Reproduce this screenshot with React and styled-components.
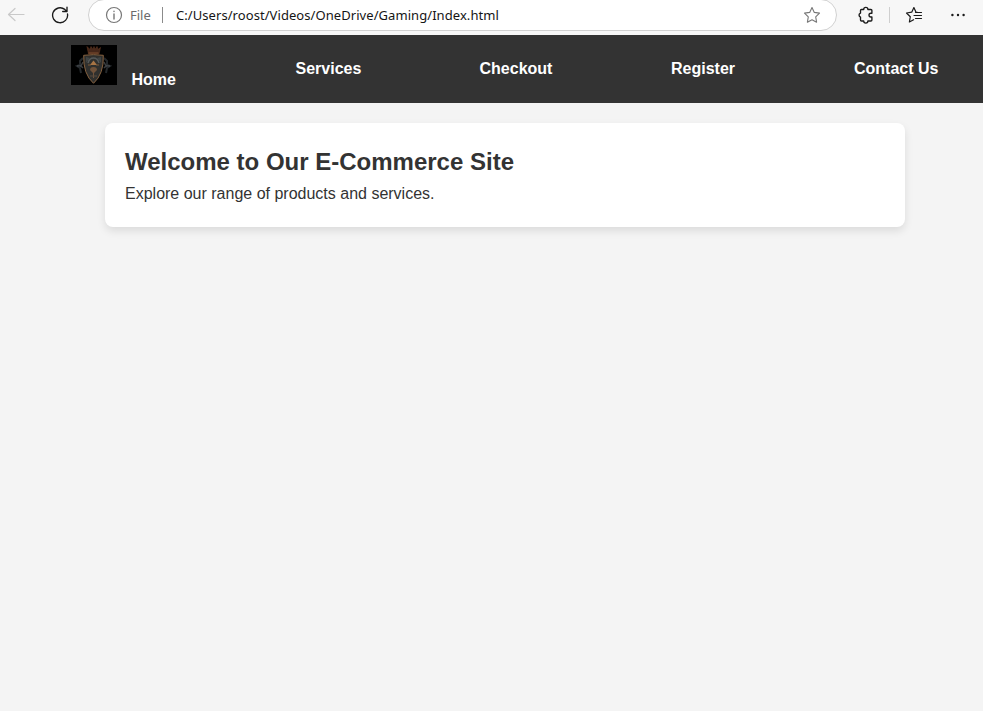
import React from 'react';
import styled, { createGlobalStyle } from 'styled-components';

const GlobalStyle = createGlobalStyle`
  * { box-sizing: border-box; }
  body {
    margin: 0;
    background: #f4f4f4;
    font-family: "Liberation Sans", Arial, sans-serif;
    overflow: hidden;
  }
`;

const Page = styled.div`
  min-height: 711px;
  background: #f4f4f4;
  color: #333;
`;

const BrowserBar = styled.header`
  display: flex;
  align-items: flex-start;
  height: 35px;
  overflow: hidden;
  background: #f7f7f7;
  font-family: "Noto Sans", "Open Sans", sans-serif;
`;

const Icon = styled.svg`
  flex: none;
  display: block;
  width: 18px;
  height: 18px;
  margin-top: ${(p) => p.$top ?? 6}px;
  margin-left: ${(p) => p.$left ?? 0}px;
  fill: none;
  stroke: ${(p) => p.$color ?? '#1b1b1b'};
  stroke-width: ${(p) => p.$weight ?? 1.2};
  stroke-linecap: round;
  stroke-linejoin: round;
`;

const AddressField = styled.div`
  display: flex;
  align-items: center;
  flex: none;
  width: 749px;
  height: 32px;
  margin: -1px 0 0 19px;
  padding: 0 15px 0 16px;
  border: 1px solid #d1d1d1;
  border-radius: 16px;
  background: #fff;
`;

const Scheme = styled.span`
  width: 24px;
  margin-left: 7px;
  color: #6b6b6b;
  font-size: 13px;
  line-height: 18px;
`;

const Divider = styled.span`
  flex: none;
  width: 1px;
  height: 16px;
  margin-top: ${(p) => p.$top ?? 0}px;
  margin-left: ${(p) => p.$left}px;
  background: ${(p) => p.$color};
`;

const Url = styled.span`
  flex: 1;
  margin-left: 13px;
  color: #151515;
  font-size: 13px;
  line-height: 18px;
  letter-spacing: 0.065px;
  white-space: nowrap;
`;

const Nav = styled.nav`
  display: flex;
  align-items: flex-start;
  height: 68px;
  padding: 10px 44px 0 71px;
  background: #333;
`;

const Crest = styled.svg`
  flex: none;
  width: 46px;
  height: 40px;
  background: #000;
`;

const NavLink = styled.a`
  flex: none;
  width: ${(p) => p.$width}px;
  margin-top: ${(p) => p.$top ?? 15}px;
  margin-left: ${(p) => p.$left ?? 0}px;
  color: #fff;
  font-size: 16px;
  font-weight: 700;
  line-height: 18px;
  text-decoration: none;
  white-space: nowrap;
`;

const Card = styled.main`
  width: 800px;
  height: 104px;
  margin: 20px 0 0 105px;
  padding: 20px;
  border-radius: 8px;
  background: #fff;
  box-shadow: 0 4px 8px rgba(0, 0, 0, 0.1);
`;

const Title = styled.h1`
  margin: 0;
  font-size: 24px;
  line-height: 38px;
  white-space: nowrap;
`;

const Lead = styled.p`
  margin: 0;
  font-size: 16px;
  line-height: 26px;
  white-space: nowrap;
`;

const STAR = 'M9 1.5l2.3 4.9 5.2.7-3.8 3.7.9 5.4L9 13.7l-4.6 2.5.9-5.4L1.5 7.1l5.2-.7z';

function CrestLogo() {
  return (
    <Crest viewBox="0 0 46 40" role="img" aria-label="Crest">
      <g fill="none" stroke="#24282b" strokeWidth="2">
        <path d="M12 13l-3 3v4l-3 1 3 2 1 5M33 13l3 3v4l3 1-3 2-1 5" />
        <path d="M12 17l-2 4 2 2M33 17l2 4-2 2" stroke="#3b3e41" strokeWidth="1.5" />
        <path d="M6 21h4M35 21h4" stroke="#50555a" strokeWidth="1" />
      </g>
      <path d="M16 1.5l3 3 1-3 2 3 1-3 1 3 2-3 1 3 2.5-2-1.5 6.5H17.5z" fill="#45271a" stroke="#613721" strokeWidth=".6" />
      <path d="M17.5 8h10" stroke="#805030" />
      <path d="M12.7 10.3Q22.5 9 32.3 10.3Q33 29 22.5 38.3Q12 29 12.7 10.3z" fill="#30302e" stroke="#85603e" strokeWidth="1" />
      <path d="M15 12l4 1-4 5zM30 12l-4 1 4 5z" fill="#414545" />
      <path d="M17 18q1.5-5 5.5-5t5.5 5" fill="none" stroke="#55595a" strokeWidth="1.5" />
      <path d="M22.5 15.5l3.5 4.5h-7z" fill="#a87545" />
      <path d="M17 20h3M25 20h3" stroke="#7b5839" />
      <path d="M19 25q0-3 3.5-3t3.5 3l-3 3v5h-1v-5z" fill="#70523a" />
      <path d="M19 31h7" stroke="#584b3f" />
    </Crest>
  );
}

export default function App() {
  return (
    <Page>
      <GlobalStyle />
      <BrowserBar>
        <Icon $left={7} $color="#c9c9c9" viewBox="0 0 18 18">
          <path d="M17 8.5H1.5M8 2.5l-6.5 6 6.5 6" />
        </Icon>
        <Icon $left={26} $weight={1.35} viewBox="0 0 18 18">
          <path d="M16.5 8A7.5 7.5 0 1 1 13.8 3.4l1.7 1.5M16 1.2v4.3h-4.3" />
        </Icon>
        <AddressField>
          <Icon $top={0} $color="#777" viewBox="0 0 18 18">
            <circle cx="9" cy="9" r="7.5" />
            <path d="M9 8v5M9 5.2v.3" strokeWidth="1.4" />
          </Icon>
          <Scheme>File</Scheme>
          <Divider $left={8} $color="#8b8b8b" />
          <Url>C:/Users/roost/Videos/OneDrive/Gaming/Index.html</Url>
          <Icon $top={0} $color="#777" $weight={1.1} viewBox="0 0 18 18">
            <path d={STAR} />
          </Icon>
        </AddressField>
        <Icon $left={20} $weight={1.35} viewBox="0 0 18 18">
          <path d="M4.5 3.5h2.2a2.1 2.1 0 0 1 4.2 0h3q1 0 1 1v2.7h-1a1.9 1.9 0 0 0 0 3.8h1v3q0 1-1 1h-3a2.1 2.1 0 0 1-4.2 0H4.5q-1 0-1-1v-2.9a2.1 2.1 0 0 1 0-4V4.5q0-1 1-1z" />
        </Icon>
        <Divider $left={14} $top={7} $color="#cfcfcf" />
        <Icon $left={15} viewBox="0 0 18 18">
          <path d="M13 6.5l-2-.3L8.9 1.5 6.7 6.2l-5.2.8 3.8 3.7-.9 5.3 4.2-2.3M10.5 6.5h6M9 9.5h7.5M10.5 12.5h6" />
        </Icon>
        <Icon $left={26} viewBox="0 0 18 18">
          <g fill="#1b1b1b" stroke="none">
            <circle cx="3.4" cy="9" r="1.2" />
            <circle cx="9" cy="9" r="1.2" />
            <circle cx="14.6" cy="9" r="1.2" />
          </g>
        </Icon>
      </BrowserBar>
      <Nav>
        <CrestLogo />
        <NavLink $left={14.5} $top={26} $width={45}>Home</NavLink>
        <NavLink $left={119} $width={65}>Services</NavLink>
        <NavLink $left={119} $width={73}>Checkout</NavLink>
        <NavLink $left={118.5} $width={64}>Register</NavLink>
        <NavLink $left={119} $width={85}>Contact Us</NavLink>
      </Nav>
      <Card>
        <Title>Welcome to Our E-Commerce Site</Title>
        <Lead>Explore our range of products and services.</Lead>
      </Card>
    </Page>
  );
}
